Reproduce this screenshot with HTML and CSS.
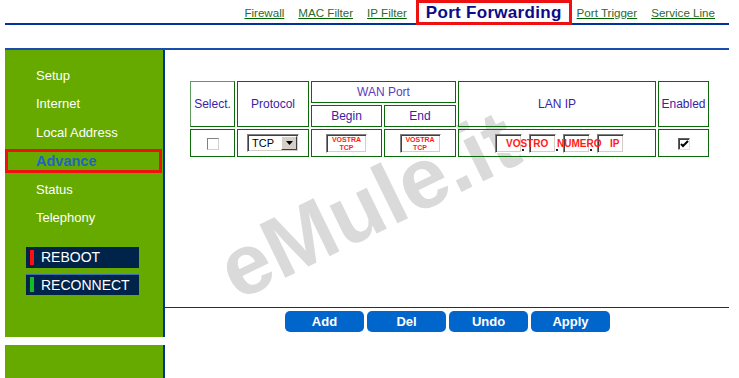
FILE: index.html
```html
<!DOCTYPE html>
<html>
<head>
  <link rel="stylesheet" href="styles.css">
</head>
<body>
<div class="page">
  <!-- top tabs -->
  <div class="topnav">
    <a href="#">Firewall</a>
    <a href="#">MAC Filter</a>
    <a href="#">IP Filter</a>
    <span class="current">Port Forwarding</span>
    <a href="#" class="after-current">Port Trigger</a>
    <a href="#">Service Line</a>
  </div>
  <div class="subbar"></div>

  <div class="layout">
    <!-- left menu -->
    <div class="sidebar">
      <div class="side-panel">
        <div class="menu">
          <a href="#">Setup</a>
          <a href="#">Internet</a>
          <a href="#">Local Address</a>
          <a href="#" class="active">Advance</a>
          <a href="#">Status</a>
          <a href="#">Telephony</a>
        </div>
        <div class="sys">
          <div class="sys-btn"><span class="led led-red"></span>REBOOT</div>
          <div class="sys-btn sys-btn-second"><span class="led led-green"></span>RECONNECT</div>
        </div>
      </div>
      <div class="side-foot"></div>
    </div>

    <!-- port forwarding table -->
    <div class="content">
      <div class="table-area">
        <table class="pf-table">
          <tr class="head-row">
            <th rowspan="2" class="col-select">Select.</th>
            <th rowspan="2" class="col-proto">Protocol</th>
            <th colspan="2" class="wan">WAN Port</th>
            <th rowspan="2" class="col-lan">LAN IP</th>
            <th rowspan="2" class="col-enabled">Enabled</th>
          </tr>
          <tr class="head-row">
            <th class="col-begin">Begin</th>
            <th class="col-end">End</th>
          </tr>
          <tr class="data-row">
            <td><span class="check"></span></td>
            <td>
              <div class="proto">
                <span class="proto-value">TCP</span>
                <span class="proto-arrow"><svg width="7" height="4" viewBox="0 0 7 4"><path d="M0 0h7L3.5 4z" fill="#000"/></svg></span>
              </div>
            </td>
            <td><div class="port-box"><span>VOSTRA</span><span>TCP</span></div></td>
            <td><div class="port-box"><span>VOSTRA</span><span>TCP</span></div></td>
            <td class="lan-cell">
              <div class="ip-group">
                <span class="ip-box"></span><span class="ip-sep"><i></i></span>
                <span class="ip-box"></span><span class="ip-sep"><i></i></span>
                <span class="ip-box"></span><span class="ip-sep"><i></i></span>
                <span class="ip-box ip-last"></span>
                <span class="ip-note note-1">VOSTRO</span>
                <span class="ip-note note-2">NUMERO</span>
                <span class="ip-note note-3">IP</span>
              </div>
            </td>
            <td>
              <span class="check checked"><svg width="9" height="9" viewBox="0 0 9 9"><path d="M1 4l2 2 5-5" fill="none" stroke="#000" stroke-width="2"/></svg></span>
            </td>
          </tr>
        </table>
      </div>
      <div class="actions">
        <button class="btn">Add</button>
        <button class="btn">Del</button>
        <button class="btn">Undo</button>
        <button class="btn">Apply</button>
      </div>
    </div>
  </div>

  <div class="watermark">eMule.it</div>
</div>
</body>
</html>
```

FILE: styles.css
```css
body {
  margin: 0;
  background: #fff;
  font-family: "Liberation Sans", Arial, sans-serif;
}
.page {
  position: relative;
  width: 724px;
  margin-left: 5px;
}

/* top tabs */
.topnav {
  display: flex;
  justify-content: flex-end;
  align-items: flex-end;
  height: 23px;
  padding-right: 14px;
  border-bottom: 2px solid #003399;
}
.topnav a {
  font-size: 11.6px;
  line-height: 14px;
  padding-bottom: 3px;
  margin-left: 14px;
  color: #2d6a2d;
  text-decoration: underline;
  text-decoration-color: #006600;
}
.topnav .current {
  position: relative;
  box-sizing: border-box;
  height: 25px;
  margin: 0 0 -2px 9px;
  padding: 0 7px 0 7px;
  border: 3px solid #ee1111;
  font-size: 17px;
  line-height: 19px;
  letter-spacing: 0.3px;
  font-weight: bold;
  color: #0c0c8a;
}
.topnav .after-current {
  margin-left: 5px;
}
.subbar {
  height: 23px;
  border-bottom: 2px solid #1a4db0;
}

.layout {
  display: flex;
}

/* sidebar */
.sidebar {
  width: 160px;
  flex: none;
}
.side-panel {
  box-sizing: border-box;
  height: 287px;
  background: #66aa00;
  border-right: 2px solid #003399;
}
.side-foot {
  box-sizing: border-box;
  height: 40px;
  margin-top: 8px;
  background: #66aa00;
  border-right: 2px solid #003399;
}
.menu {
  padding-top: 12px;
}
.menu a {
  display: block;
  height: 28.4px;
  line-height: 28.4px;
  padding-left: 31px;
  font-size: 13px;
  color: #fff;
  text-decoration: none;
}
.menu a.active {
  box-sizing: border-box;
  height: 24px;
  margin: 2px 1px 2.4px 0;
  padding-left: 28px;
  border: 3px solid #ee1111;
  line-height: 18px;
  font-size: 14.5px;
  font-weight: bold;
  color: #1b64c8;
}
.sys {
  margin: 14.6px 0 0 21px;
}
.sys-btn {
  box-sizing: border-box;
  display: flex;
  align-items: center;
  width: 113px;
  height: 21px;
  padding-left: 4px;
  background: #00234a;
  color: #fff;
  font-size: 14px;
}
.sys-btn-second {
  margin-top: 6px;
  border-top: 1px solid #3a6fb0;
}
.led {
  width: 4px;
  height: 15px;
  margin-right: 7px;
}
.led-red {
  background: #ff1010;
}
.led-green {
  background: #10c020;
}

/* main */
.content {
  flex: 1;
}
.table-area {
  box-sizing: border-box;
  height: 258px;
  padding: 29px 0 0 23px;
  border-bottom: 1px solid #003399;
}
.pf-table {
  border-spacing: 2px;
}
.pf-table th,
.pf-table td {
  padding: 0;
  border: 1px solid #0a6a0a;
  text-align: center;
  font-size: 12px;
  font-weight: normal;
}
.pf-table th {
  height: 20px;
  color: #3a22a8;
}
.pf-table th.wan {
  color: #5a3cc0;
}
.pf-table .col-select {
  width: 43px;
  border-color: #5d9a5d #0a6a0a #0a6a0a #5d9a5d;
}
.col-proto { width: 70px; }
.col-begin { width: 69px; }
.col-end { width: 70px; }
.col-lan { width: 196px; }
.col-enabled { width: 49px; }
.pf-table td {
  height: 26px;
}

/* classic form controls */
.check {
  display: inline-block;
  box-sizing: border-box;
  width: 12px;
  height: 12px;
  vertical-align: middle;
  background: #fff;
  border: 1px solid;
  border-color: #808080 #d4d0c8 #d4d0c8 #808080;
}
.check.checked {
  border-color: #606060 #e0e0e0 #e0e0e0 #606060;
  box-shadow: inset 1px 1px 0 #404040;
}
.check svg {
  display: block;
  margin: 1px 0 0 1px;
}
.proto {
  box-sizing: border-box;
  display: inline-flex;
  align-items: center;
  justify-content: space-between;
  width: 52px;
  height: 18px;
  vertical-align: middle;
  padding: 0 1px 0 4px;
  background: #fff;
  border: 1px solid;
  border-color: #808080 #fff #fff #808080;
  box-shadow: inset 1px 1px 0 #404040, inset -1px -1px 0 #d4d0c8;
}
.proto-value {
  font-size: 11px;
  color: #000;
}
.proto-arrow {
  box-sizing: border-box;
  display: flex;
  align-items: center;
  justify-content: center;
  width: 16px;
  height: 14px;
  background: #d4d0c8;
  border: 1px solid;
  border-color: #fff #404040 #404040 #fff;
}
.port-box {
  box-sizing: border-box;
  display: inline-flex;
  flex-direction: column;
  align-items: center;
  width: 41px;
  height: 19px;
  vertical-align: middle;
  padding-top: 1px;
  background: #fff;
  border: 1px solid;
  border-color: #808080 #fff #fff #808080;
  box-shadow: inset 1px 1px 0 #404040, inset -1px -1px 0 #d4d0c8;
  color: #ff1a1a;
  font-size: 7px;
  font-weight: bold;
  line-height: 8px;
}
.pf-table td.lan-cell {
  text-align: left;
  padding-left: 36px;
}
.ip-group {
  position: relative;
  display: inline-flex;
  vertical-align: middle;
}
.ip-box {
  box-sizing: border-box;
  width: 27px;
  height: 19px;
  background: #fff;
  border: 1px solid;
  border-color: #808080 #fff #fff #808080;
  box-shadow: inset 1px 1px 0 #404040, inset -1px -1px 0 #d4d0c8;
}
.ip-sep {
  display: flex;
  align-items: flex-end;
  width: 7px;
  padding-bottom: 2px;
  box-sizing: border-box;
}
.ip-sep i {
  width: 2px;
  height: 2px;
  background: #222;
}
.ip-note {
  position: absolute;
  top: 4px;
  font-size: 10px;
  line-height: 12px;
  font-weight: bold;
  color: #ff1a1a;
}
.note-1 { left: 11px; }
.note-2 { left: 62px; }
.note-3 { left: 115px; }

/* buttons */
.actions {
  display: flex;
  gap: 3px;
  padding: 3px 0 0 120px;
}
.btn {
  width: 79px;
  height: 21px;
  padding: 0;
  border: none;
  border-radius: 5px;
  background: #0066cc;
  color: #fff;
  font-family: "Liberation Sans", Arial, sans-serif;
  font-size: 13px;
  font-weight: bold;
}

/* watermark */
.watermark {
  position: absolute;
  left: 238px;
  top: 227px;
  z-index: -1;
  transform-origin: 0 100%;
  transform: rotate(-26deg);
  font-size: 86px;
  line-height: 1;
  font-weight: bold;
  color: #dadada;
  white-space: nowrap;
}
```
